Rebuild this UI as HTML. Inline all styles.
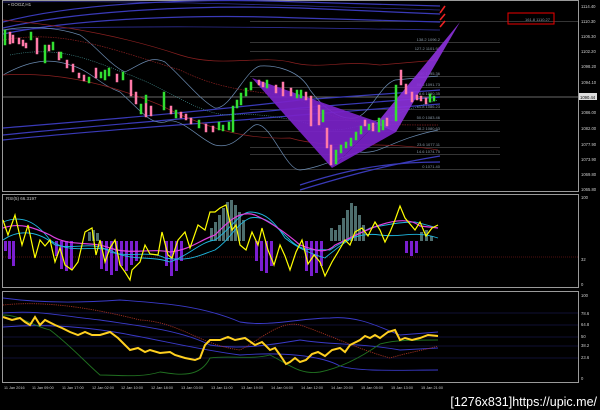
<!DOCTYPE html>
<html><head><meta charset="utf-8"><style>
html,body{margin:0;padding:0;background:#000;width:600px;height:410px;overflow:hidden}
svg{display:block}
text{font-family:"Liberation Sans",sans-serif}
</style></head><body>
<svg width="600" height="410" viewBox="0 0 600 410" xmlns="http://www.w3.org/2000/svg">
<rect width="600" height="410" fill="#000"/>
<!-- frames -->
<g fill="none" stroke="#9a9a9a" stroke-width="1">
<rect x="2.5" y="0.5" width="576" height="191"/>
<rect x="2.5" y="194.5" width="576" height="93"/>
<rect x="2.5" y="291.5" width="576" height="91"/>
</g>
<text x="8" y="6" font-size="4.5" fill="#ccc">▪ GOGZ,H1</text>
<!-- fib lines -->
<g stroke="#6a6a6a" stroke-width="0.6">
<line x1="250" y1="21.5" x2="578" y2="21.5"/>
<line x1="250" y1="42.5" x2="500" y2="42.5"/>
<line x1="250" y1="51.5" x2="500" y2="51.5"/>
<line x1="250" y1="76.5" x2="500" y2="76.5"/>
<line x1="250" y1="87.5" x2="500" y2="87.5"/>
<line x1="250" y1="109.5" x2="500" y2="109.5"/>
<line x1="250" y1="120.5" x2="500" y2="120.5"/>
<line x1="250" y1="131.5" x2="500" y2="131.5"/>
<line x1="250" y1="147.5" x2="500" y2="147.5"/>
<line x1="250" y1="154.5" x2="500" y2="154.5"/>
<line x1="250" y1="169.5" x2="500" y2="169.5"/>
</g>
<line x1="3" y1="97" x2="578" y2="97" stroke="#8a8a8a" stroke-width="0.8"/>
<g font-size="4" fill="#8a9aa8" text-anchor="end">
<text x="440" y="41">138.2 1096.2</text>
<text x="440" y="50">127.2 1101.97</text>
<text x="440" y="75">100 1095.36</text>
<text x="440" y="86">88.6 1091.73</text>
<text x="440" y="95">78.6 1090.35</text>
<text x="440" y="108">61.8 1086.23</text>
<text x="440" y="119">50.0 1083.46</text>
<text x="440" y="130">38.2 1080.63</text>
<text x="440" y="146">23.6 1077.11</text>
<text x="440" y="153">14.6 1074.75</text>
<text x="440" y="168">0 1071.40</text>
</g>
<rect x="508" y="13" width="46" height="11" fill="none" stroke="#e00" stroke-width="1"/>
<text x="550" y="21" font-size="4" fill="#8a9aa8" text-anchor="end">161.8 1110.27</text>
<!-- right axis -->
<g font-size="4.2" fill="#ccc">
<text x="581" y="8">1114.40</text><text x="581" y="23">1110.30</text>
<text x="581" y="38">1106.30</text><text x="581" y="53">1102.20</text>
<text x="581" y="68">1098.20</text><text x="581" y="84">1094.10</text>
<text x="581" y="114">1086.00</text><text x="581" y="130">1082.00</text>
<text x="581" y="146">1077.90</text><text x="581" y="161">1073.90</text>
<text x="581" y="176">1069.80</text><text x="581" y="191">1065.80</text>
<text x="581" y="199">100</text><text x="581" y="261">32</text><text x="581" y="286">0</text>
<text x="581" y="297">100</text><text x="581" y="315">78.6</text><text x="581" y="326">64.8</text>
<text x="581" y="338">50</text><text x="581" y="347">38.2</text><text x="581" y="359">23.6</text><text x="581" y="380">0</text>
</g>
<rect x="579" y="93" width="18" height="7" fill="#ddd"/>
<text x="580" y="99" font-size="4.2" fill="#000">1090.44</text>
<!-- envelope blue bands -->
<g fill="none" stroke="#3a3ab8" stroke-width="1.2">
<path d="M3,28 C80,10 200,5 300,8 L440,14"/>
<path d="M3,22 C80,2 200,-2 300,2 L440,6"/>
<path d="M3,34 C80,18 200,14 300,18 L440,22"/>
<path d="M3,135 C100,125 200,118 300,108 L440,97"/>
<path d="M3,140 C100,130 200,124 300,115 L440,104"/>
<path d="M3,128 C100,120 200,112 300,100 L440,90"/>
<path d="M300,190 C340,178 380,166 440,156"/>
<path d="M300,185 C340,172 380,162 440,162"/>
</g>
<g fill="none" stroke="#3a3ab8" stroke-width="0.8" opacity="0.8">
<path d="M3,2 C150,0 300,6 440,10"/>
<path d="M3,30 C150,24 300,28 440,30"/>
</g>
<!-- bollinger -->
<g fill="none" stroke="#6a8ab0" stroke-width="0.7">
<path d="M3,30 C30,25 60,28 80,35 C95,45 110,65 125,72 C140,65 150,55 165,62 C185,80 200,100 215,108 C230,110 245,70 260,66 C275,65 300,70 310,90 C325,110 340,120 355,118 C370,115 380,85 395,80 L438,76"/>
<path d="M3,75 C30,60 50,58 70,65 C90,70 100,85 120,92 C140,110 150,125 165,122 C180,115 200,140 215,145 C235,150 245,130 255,125 C270,120 285,170 300,170 C320,168 345,155 360,152 C380,155 390,140 438,130"/>
</g>
<g fill="none" stroke="#8a2020" stroke-width="0.7">
<path d="M3,20 C60,25 120,35 180,55 C220,68 260,55 290,62 C320,70 340,60 380,65 L438,60"/>
<path d="M3,75 C50,72 100,80 160,105 C200,125 240,140 290,138 C330,150 380,140 438,150"/>
<path d="M3,40 C60,30 100,45 180,70 C230,95 270,90 300,100 C340,125 370,125 438,125" stroke-dasharray="1.5,1"/>
</g>
<path d="M10,55 C60,45 90,60 130,75 C170,90 200,115 230,115 C260,112 300,120 330,130 C360,130 380,118 438,100" fill="none" stroke="#4aa0a0" stroke-width="0.6" stroke-dasharray="1,1.2"/>
<!-- purple gartley -->
<polygon points="252,78 378,122 332,168" fill="#7a22c8" opacity="0.92"/>
<polygon points="332,168 378,122 396,132" fill="#7a22c8" opacity="0.92"/>
<polygon points="376,124 460,22 396,132" fill="#8a30d8" opacity="0.92"/>
<!-- red arrows top -->
<g stroke="#e22" stroke-width="1.6"><line x1="440" y1="13" x2="445" y2="6"/><line x1="440" y1="20" x2="445" y2="14"/><line x1="440" y1="27" x2="445" y2="21"/></g>
<!-- candles -->
<g stroke-width="0.5">
<g fill="#ff7aa8" stroke="#ff7aa8">
<rect x="9" y="32" width="2" height="12"/><rect x="12" y="35" width="2" height="8"/><rect x="18" y="38" width="2" height="6"/><rect x="22" y="40" width="2" height="6"/><rect x="25" y="43" width="2" height="5"/>
<rect x="36" y="38" width="2" height="16"/><rect x="48" y="45" width="2" height="6"/><rect x="58" y="52" width="2" height="8"/><rect x="66" y="60" width="2" height="8"/><rect x="72" y="64" width="2" height="8"/>
<rect x="78" y="73" width="2" height="5"/><rect x="83" y="75" width="2" height="6"/><rect x="95" y="68" width="2" height="10"/><rect x="116" y="74" width="2" height="8"/><rect x="130" y="80" width="2" height="16"/>
<rect x="135" y="92" width="2" height="12"/><rect x="145" y="103" width="2" height="14"/><rect x="150" y="106" width="2" height="10"/><rect x="170" y="106" width="2" height="8"/><rect x="180" y="112" width="2" height="6"/>
<rect x="185" y="114" width="2" height="6"/><rect x="190" y="118" width="2" height="6"/><rect x="205" y="124" width="2" height="8"/><rect x="212" y="126" width="2" height="6"/>
<rect x="258" y="80" width="2" height="5"/><rect x="262" y="82" width="2" height="5"/><rect x="275" y="85" width="2" height="8"/><rect x="282" y="82" width="2" height="14"/><rect x="290" y="88" width="2" height="8"/>
<rect x="305" y="92" width="2" height="8"/><rect x="310" y="96" width="2" height="30"/><rect x="318" y="105" width="2" height="20"/><rect x="326" y="128" width="2" height="20"/><rect x="330" y="145" width="2" height="20"/>
<rect x="364" y="120" width="2" height="6"/><rect x="372" y="123" width="2" height="8"/><rect x="386" y="118" width="2" height="8"/><rect x="400" y="70" width="2" height="15"/><rect x="405" y="84" width="2" height="10"/>
<rect x="411" y="92" width="2" height="10"/><rect x="416" y="95" width="2" height="5"/><rect x="420" y="96" width="2" height="5"/><rect x="425" y="98" width="2" height="6"/>
</g>
<g fill="#33e033" stroke="#33e033">
<rect x="4" y="30" width="2" height="15"/><rect x="30" y="32" width="2" height="8"/><rect x="44" y="45" width="2" height="18"/><rect x="52" y="42" width="2" height="8"/><rect x="60" y="52" width="2" height="6"/>
<rect x="88" y="77" width="2" height="6"/><rect x="100" y="72" width="2" height="6"/><rect x="104" y="70" width="2" height="10"/><rect x="108" y="68" width="2" height="8"/><rect x="122" y="72" width="2" height="8"/>
<rect x="140" y="104" width="2" height="10"/><rect x="145" y="95" width="2" height="8"/><rect x="163" y="92" width="2" height="18"/><rect x="175" y="110" width="2" height="8"/><rect x="198" y="120" width="2" height="8"/>
<rect x="218" y="122" width="2" height="8"/><rect x="222" y="125" width="2" height="6"/><rect x="228" y="122" width="2" height="8"/><rect x="232" y="106" width="2" height="26"/><rect x="236" y="100" width="2" height="8"/>
<rect x="240" y="93" width="2" height="12"/><rect x="245" y="88" width="2" height="8"/><rect x="250" y="82" width="2" height="8"/><rect x="266" y="80" width="2" height="8"/><rect x="296" y="90" width="2" height="8"/>
<rect x="300" y="90" width="2" height="8"/><rect x="322" y="110" width="2" height="12"/><rect x="335" y="150" width="2" height="14"/><rect x="340" y="145" width="2" height="8"/><rect x="345" y="142" width="2" height="6"/>
<rect x="350" y="138" width="2" height="8"/><rect x="355" y="132" width="2" height="8"/><rect x="360" y="126" width="2" height="8"/><rect x="368" y="124" width="2" height="6"/><rect x="378" y="118" width="2" height="14"/>
<rect x="382" y="120" width="2" height="10"/><rect x="395" y="85" width="2" height="36"/><rect x="429" y="94" width="2" height="8"/><rect x="433" y="96" width="2" height="5"/>
</g>
</g>
<!-- RSI panel -->
<text x="6" y="200" font-size="4.5" fill="#ccc">RSI(5) 66.3197</text>
<line x1="3" y1="257" x2="578" y2="257" stroke="#a02020" stroke-width="0.6" stroke-dasharray="1,1"/>
<g fill="#7a1fd0">
<rect x="4" y="241" width="3" height="10"/><rect x="8" y="241" width="3" height="18"/><rect x="12" y="241" width="3" height="25"/>
<rect x="55" y="241" width="3" height="15"/><rect x="60" y="241" width="3" height="28"/><rect x="65" y="241" width="3" height="30"/><rect x="70" y="241" width="3" height="28"/>
<rect x="100" y="241" width="3" height="28"/><rect x="105" y="241" width="3" height="30"/><rect x="110" y="241" width="3" height="34"/><rect x="115" y="241" width="3" height="30"/><rect x="120" y="241" width="3" height="25"/>
<rect x="125" y="241" width="3" height="30"/><rect x="130" y="241" width="3" height="24"/><rect x="135" y="241" width="3" height="20"/>
<rect x="165" y="241" width="3" height="25"/><rect x="170" y="241" width="3" height="35"/><rect x="175" y="241" width="3" height="30"/><rect x="180" y="241" width="3" height="20"/>
<rect x="255" y="241" width="3" height="20"/><rect x="260" y="241" width="3" height="30"/><rect x="265" y="241" width="3" height="32"/><rect x="270" y="241" width="3" height="25"/>
<rect x="305" y="241" width="3" height="30"/><rect x="310" y="241" width="3" height="35"/><rect x="315" y="241" width="3" height="32"/><rect x="320" y="241" width="3" height="25"/>
<rect x="405" y="241" width="3" height="12"/><rect x="410" y="241" width="3" height="15"/><rect x="415" y="241" width="3" height="12"/>
</g>
<g fill="#4e6e6e">
<rect x="88" y="232" width="3" height="9"/><rect x="92" y="230" width="3" height="11"/><rect x="96" y="233" width="3" height="8"/>
<rect x="210" y="228" width="3" height="13"/><rect x="214" y="222" width="3" height="19"/><rect x="218" y="215" width="3" height="26"/><rect x="222" y="208" width="3" height="33"/><rect x="226" y="202" width="3" height="39"/><rect x="230" y="200" width="3" height="41"/><rect x="234" y="205" width="3" height="36"/><rect x="238" y="212" width="3" height="29"/><rect x="242" y="220" width="3" height="21"/>
<rect x="330" y="228" width="3" height="13"/><rect x="334" y="230" width="3" height="11"/><rect x="338" y="225" width="3" height="16"/><rect x="342" y="218" width="3" height="23"/><rect x="346" y="210" width="3" height="31"/><rect x="350" y="203" width="3" height="38"/><rect x="354" y="206" width="3" height="35"/><rect x="358" y="215" width="3" height="26"/><rect x="362" y="225" width="3" height="16"/>
<rect x="420" y="232" width="3" height="9"/><rect x="425" y="230" width="3" height="11"/><rect x="430" y="236" width="3" height="5"/>
</g>
<g fill="none" stroke-width="0.9">
<path stroke="#1fb8e0" d="M3,222 C20,215 35,220 50,240 C70,255 90,245 110,250 C130,262 150,255 170,262 C190,255 200,242 215,240 C230,230 240,212 250,212 C265,212 275,222 285,238 C300,250 315,255 325,258 C340,245 355,235 370,228 C385,225 400,222 415,222 L438,228"/>
<path stroke="#1fb8e0" d="M3,240 C20,228 40,232 55,245 C75,250 95,240 110,252 C130,258 150,250 165,258 C190,262 200,255 215,250 C230,240 235,225 250,218 C265,215 275,225 290,240 C305,255 320,248 330,250 C345,240 360,232 380,235 C400,238 415,230 438,238"/>
<path stroke="#e040e0" stroke-width="1.2" d="M3,228 C20,222 35,228 50,235 C70,248 90,240 110,248 C130,255 150,248 170,252 C190,250 200,240 215,235 C230,220 240,210 255,215 C270,222 285,232 300,245 C315,250 325,255 335,245 C350,238 365,230 380,225 C395,220 410,218 420,226 L438,228"/>
<path stroke="#ff0" stroke-width="1.2" d="M3,220 L8,235 L15,215 L22,245 L28,225 L35,258 L40,240 L45,246 L50,240 L55,262 L60,248 L65,265 L72,270 L78,262 L85,232 L92,228 L96,255 L100,240 L105,262 L110,248 L115,240 L120,265 L125,272 L130,280 L132,270 L140,262 L145,245 L150,254 L158,255 L162,232 L168,255 L172,258 L178,240 L185,232 L190,248 L198,225 L205,230 L210,212 L215,212 L220,208 L226,205 L232,230 L236,225 L240,245 L246,250 L252,232 L258,245 L262,228 L268,250 L274,265 L280,245 L285,256 L290,270 L296,252 L302,240 L308,264 L314,255 L320,262 L325,276 L332,262 L338,252 L345,240 L350,245 L355,232 L362,228 L368,236 L375,222 L380,230 L385,242 L390,232 L395,220 L400,206 L405,218 L410,224 L415,230 L420,222 L426,236 L432,228 L438,225"/>
</g>
<!-- lower panel -->
<g stroke="#20206a" stroke-width="0.5">
<line x1="3" y1="313" x2="578" y2="313"/><line x1="3" y1="325" x2="578" y2="325"/><line x1="3" y1="337" x2="578" y2="337"/><line x1="3" y1="346" x2="578" y2="346"/><line x1="3" y1="358" x2="578" y2="358"/>
</g>
<g fill="none" stroke-width="0.9">
<path stroke="#3a3ac8" d="M3,298 C40,303 80,303 120,300 C160,303 200,305 240,322 C270,327 300,318 330,318 C360,315 385,330 400,335 L438,332"/>
<path stroke="#3a3ac8" d="M3,313 C40,310 60,316 100,320 C140,326 180,330 210,345 C240,350 270,345 300,340 C330,345 360,343 400,350 L438,348"/>
<path stroke="#3a3ac8" d="M3,327 C40,324 80,326 120,333 C160,340 200,350 240,355 C280,352 320,355 340,366 C360,372 400,370 438,370"/>
<path stroke="#207020" d="M3,315 C20,315 30,325 50,330 C70,345 85,362 100,375 C120,375 140,378 160,372 C180,375 200,378 210,358 C230,355 250,360 270,355 C290,365 300,375 320,372 C340,368 360,358 380,344 C395,340 410,340 438,340"/>
<path stroke="#a03020" stroke-dasharray="1.2,1" d="M3,305 C50,300 100,310 140,320 C180,322 200,345 240,350 C260,340 280,320 300,325 C330,335 360,350 390,358 C410,352 425,350 438,346"/>
<path stroke="#ffd020" stroke-width="2" d="M3,317 L12,320 L20,318 L25,322 L30,325 L35,317 L40,325 L45,320 L55,325 L62,328 L70,332 L78,335 L85,332 L92,335 L100,335 L110,332 L118,338 L125,345 L130,350 L138,348 L145,352 L150,350 L160,353 L170,352 L175,355 L185,358 L195,360 L200,358 L205,345 L210,340 L220,340 L228,337 L235,340 L245,338 L255,345 L262,342 L270,350 L275,348 L280,355 L286,364 L290,362 L295,358 L300,362 L306,360 L312,354 L318,352 L325,356 L332,350 L340,348 L345,352 L350,345 L360,340 L365,336 L370,338 L375,335 L380,338 L388,332 L395,330 L400,340 L405,338 L412,340 L420,338 L428,335 L438,336"/>
</g>
<!-- time axis -->
<g font-size="3.8" fill="#ccc">
<text x="4" y="389">11 Jan 2016</text><text x="32" y="389">11 Jan 09:00</text><text x="62" y="389">11 Jan 17:00</text><text x="92" y="389">12 Jan 02:00</text>
<text x="121" y="389">12 Jan 10:00</text><text x="151" y="389">12 Jan 18:00</text><text x="181" y="389">13 Jan 03:00</text><text x="211" y="389">13 Jan 11:00</text>
<text x="241" y="389">13 Jan 19:00</text><text x="271" y="389">14 Jan 04:00</text><text x="301" y="389">14 Jan 12:00</text><text x="331" y="389">14 Jan 20:00</text>
<text x="361" y="389">15 Jan 05:00</text><text x="391" y="389">15 Jan 13:00</text><text x="421" y="389">15 Jan 21:00</text>
</g>
<text x="597" y="406" font-size="12.5" fill="#fff" text-anchor="end" font-family="DejaVu Sans Mono, monospace">[1276x831]https://upic.me/</text>
</svg>
</body></html>
